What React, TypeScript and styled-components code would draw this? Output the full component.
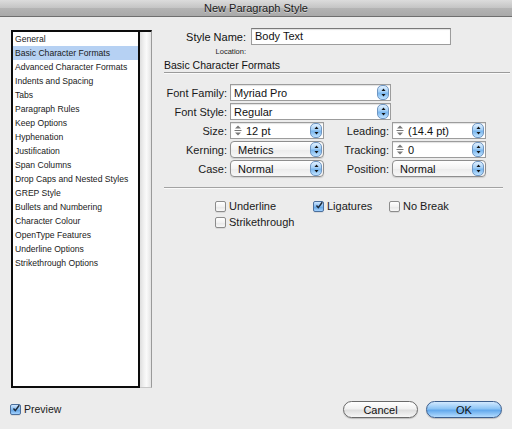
import React from "react";
import styled, { createGlobalStyle } from "styled-components";

const Global = createGlobalStyle`
  html, body { margin: 0; padding: 0; background: #ececec; }
  body { font-family: "Liberation Sans", Arial, sans-serif; color: #111; }
  * { box-sizing: border-box; }
`;

const Window = styled.div`
  width: 512px;
  height: 429px;
  display: flex;
  flex-direction: column;
  background: #ececec;
  overflow: hidden;
`;

const TitleBar = styled.div`
  height: 17px;
  flex: none;
  display: flex;
  align-items: center;
  justify-content: center;
  background: linear-gradient(#dcdcdc, #c4c4c4 50%, #b4b4b4 51%, #a9a9a9);
  border-bottom: 1px solid #6f6f6f;
  font-size: 11px;
  color: #1a1a1a;
  text-shadow: 0 1px 0 rgba(255, 255, 255, 0.45);
`;

const Main = styled.div`
  flex: 1;
  display: flex;
  align-items: flex-start;
  gap: 12px;
  padding: 11px 0 0 11px;
`;

const ListFrame = styled.div`
  margin-top: 2px;
  width: 141px;
  height: 358px;
  display: flex;
  flex: none;
`;

const ListBox = styled.div`
  width: 129px;
  height: 100%;
  background: #fff;
  border: 2px solid #0c0c0c;
  display: flex;
  flex-direction: column;
`;

const ScrollTrack = styled.div`
  flex: 1;
  height: 100%;
  border-top: 2px solid #0c0c0c;
  border-right: 1px solid #9a9a9a;
  border-bottom: 1px solid #c8c8c8;
  background: linear-gradient(to right, #dedede, #f3f3f3 40%, #fafafa 60%, #e4e4e4);
`;

const ListItem = styled.div<{ $selected?: boolean }>`
  height: 14px;
  line-height: 14px;
  padding-left: 2px;
  font-size: 8.6px;
  white-space: nowrap;
  color: #1a1a1a;
  background: ${(p) => (p.$selected ? "#b6d1f3" : "transparent")};
`;

const Panel = styled.div`
  flex: 1;
  display: flex;
  flex-direction: column;
`;

const NameRow = styled.div`
  display: flex;
  align-items: center;
  height: 17px;
  gap: 5px;
`;

const NameLabel = styled.div`
  width: 82px;
  text-align: right;
  font-size: 11px;
`;

const TextInput = styled.div`
  width: 200px;
  height: 17px;
  background: #fff;
  border: 1px solid #9c9c9c;
  border-top-color: #7a7a7a;
  box-shadow: inset 0 1px 1px rgba(0, 0, 0, 0.12);
  font-size: 11px;
  line-height: 15px;
  padding-left: 3px;
`;

const LocationRow = styled.div`
  margin-top: 2px;
  height: 10px;
  width: 82px;
  text-align: right;
  font-size: 7.5px;
  line-height: 10px;
  color: #222;
`;

const Heading = styled.div`
  margin-top: 2px;
  margin-right: 2px;
  font-size: 10.5px;
  line-height: 12px;
  border-bottom: 1px solid #9a9a9a;
  box-shadow: 0 1px 0 #fafafa;
  padding-bottom: 1px;
`;

const FormGrid = styled.div`
  margin-top: 11px;
  display: grid;
  grid-template-columns: 63px 94px 62px 94px;
  column-gap: 3px;
  row-gap: 2px;
  grid-auto-rows: 17px;
  align-items: center;
`;

const Label = styled.div`
  text-align: right;
  font-size: 11px;
  white-space: nowrap;
  color: #1a1a1a;
`;

const WideCell = styled.div`
  grid-column: 2 / 5;
`;

const Field = styled.div<{ $w?: number; $rounded?: boolean; $popup?: boolean }>`
  width: ${(p) => (p.$w ? `${p.$w}px` : "100%")};
  height: 17px;
  display: flex;
  align-items: center;
  background: ${(p) => (p.$popup ? "linear-gradient(#ffffff, #f3f3f3 50%, #ebebeb 51%, #f7f7f7)" : "#fff")};
  border: 1px solid ${(p) => (p.$popup ? "#8e8e8e" : "#9c9c9c")};
  border-radius: ${(p) => (p.$rounded ? "4px" : "0")};
  box-shadow: ${(p) => (p.$popup ? "0 1px 1px rgba(0,0,0,0.12)" : "inset 0 1px 1px rgba(0,0,0,0.12)")};
  font-size: 11px;
  padding-left: ${(p) => (p.$popup ? "7px" : "3px")};
`;

const FieldText = styled.span`
  flex: 1;
  white-space: nowrap;
  overflow: hidden;
`;

const ArrowCap = styled.div`
  flex: none;
  width: 12px;
  height: 15px;
  margin-right: 1px;
  border-radius: 5px;
  background: linear-gradient(#e0f0ff, #a3cff6 45%, #79b6ee 55%, #bfe2ff);
  border: 1px solid #6f96c2;
  display: flex;
  align-items: center;
  justify-content: center;
`;

const StepIconWrap = styled.span`
  flex: none;
  width: 9px;
  display: flex;
  align-items: center;
  margin-right: 3px;
`;

const Separator = styled.div`
  margin-top: 10px;
  width: 339px;
  height: 1px;
  background: #a3a3a3;
  box-shadow: 0 1px 0 #fafafa;
`;

const ChecksGrid = styled.div`
  margin-top: 12px;
  margin-left: 51px;
  display: grid;
  grid-template-columns: 98px 76px auto;
  grid-auto-rows: 12px;
  row-gap: 4px;
  align-items: center;
`;

const CheckItem = styled.label`
  display: flex;
  align-items: center;
  gap: 3px;
  font-size: 11px;
  white-space: nowrap;
  color: #1a1a1a;
`;

const Box = styled.span<{ $checked?: boolean }>`
  width: 11px;
  height: 11px;
  flex: none;
  border: 1px solid ${(p) => (p.$checked ? "#4b6f9c" : "#8c8c8c")};
  border-radius: 2px;
  background: ${(p) =>
    p.$checked
      ? "linear-gradient(#cfe6ff, #7fb8ef 50%, #5d9fe0 51%, #a3d2ff)"
      : "linear-gradient(#ffffff, #f2f2f2 50%, #e6e6e6 51%, #f8f8f8)"};
  box-shadow: 0 1px 0 rgba(0, 0, 0, 0.08);
  display: flex;
  align-items: center;
  justify-content: center;
  overflow: visible;
`;

const Footer = styled.div`
  height: 34px;
  flex: none;
  display: flex;
  align-items: flex-start;
  padding: 6px 10px 0 10px;
`;

const PreviewItem = styled(CheckItem)`
  margin-top: 2px;
  font-size: 10.5px;
`;

const Spacer = styled.div`
  flex: 1;
`;

const Buttons = styled.div`
  display: flex;
  gap: 8px;
`;

const AquaButton = styled.button<{ $primary?: boolean; $w: number }>`
  width: ${(p) => p.$w}px;
  height: 17px;
  border-radius: 9px;
  padding: 0;
  font-family: "Liberation Sans", Arial, sans-serif;
  font-size: 11px;
  color: #111;
  border: 1px solid ${(p) => (p.$primary ? "#3d5f8e" : "#6a6a6a")};
  background: ${(p) =>
    p.$primary
      ? "linear-gradient(#d2e9ff, #8cc4f5 45%, #62a8ec 55%, #b3dcff)"
      : "linear-gradient(#ffffff, #f1f1f1 45%, #dedede 55%, #f7f7f7)"};
  box-shadow: 0 1px 1px rgba(0, 0, 0, 0.2);
`;

const Arrows = () => (
  <svg width="7" height="11" viewBox="0 0 7 11">
    <path d="M3.5 1.5 L5.5 4 L1.5 4 Z" fill="#111" />
    <path d="M3.5 9.5 L5.5 7 L1.5 7 Z" fill="#111" />
  </svg>
);

const StepIcon = () => (
  <StepIconWrap>
    <svg width="8" height="11" viewBox="0 0 8 11">
      <path d="M4 0.5 L7 3.5 L1 3.5 Z" fill="#777" />
      <rect x="0.5" y="5" width="7" height="1" fill="#777" />
      <path d="M4 10.5 L7 7.5 L1 7.5 Z" fill="#777" />
    </svg>
  </StepIconWrap>
);

const Check = () => (
  <svg width="11" height="11" viewBox="0 0 11 11" style={{ marginTop: -2, marginLeft: 1 }}>
    <path d="M2 5.5 L4.5 8.5 L10 1" fill="none" stroke="#1d2a3a" strokeWidth="2" />
  </svg>
);

type CheckProps = { label: string; checked?: boolean };
const Checkbox = ({ label, checked }: CheckProps) => (
  <CheckItem>
    <Box $checked={checked}>{checked && <Check />}</Box>
    {label}
  </CheckItem>
);

const items = [
  "General",
  "Basic Character Formats",
  "Advanced Character Formats",
  "Indents and Spacing",
  "Tabs",
  "Paragraph Rules",
  "Keep Options",
  "Hyphenation",
  "Justification",
  "Span Columns",
  "Drop Caps and Nested Styles",
  "GREP Style",
  "Bullets and Numbering",
  "Character Colour",
  "OpenType Features",
  "Underline Options",
  "Strikethrough Options",
];

type SelProps = { value: string; w?: number; popup?: boolean; stepper?: boolean };
const Select = ({ value, w, popup, stepper }: SelProps) => (
  <Field $w={w} $popup={popup} $rounded={popup}>
    {stepper && <StepIcon />}
    <FieldText>{value}</FieldText>
    <ArrowCap>
      <Arrows />
    </ArrowCap>
  </Field>
);

export default function App() {
  return (
    <>
      <Global />
      <Window>
        <TitleBar>New Paragraph Style</TitleBar>
        <Main>
          <ListFrame>
            <ListBox>
              {items.map((it, i) => (
                <ListItem key={it} $selected={i === 1}>
                  {it}
                </ListItem>
              ))}
            </ListBox>
            <ScrollTrack />
          </ListFrame>
          <Panel>
            <NameRow>
              <NameLabel>Style Name:</NameLabel>
              <TextInput>Body Text</TextInput>
            </NameRow>
            <LocationRow>Location:</LocationRow>
            <Heading>Basic Character Formats</Heading>
            <FormGrid>
              <Label>Font Family:</Label>
              <WideCell>
                <Select value="Myriad Pro" w={161} />
              </WideCell>
              <Label>Font Style:</Label>
              <WideCell>
                <Select value="Regular" w={161} />
              </WideCell>
              <Label>Size:</Label>
              <Select value="12 pt" stepper />
              <Label>Leading:</Label>
              <Select value="(14.4 pt)" stepper />
              <Label>Kerning:</Label>
              <Select value="Metrics" popup />
              <Label>Tracking:</Label>
              <Select value="0" stepper />
              <Label>Case:</Label>
              <Select value="Normal" popup />
              <Label>Position:</Label>
              <Select value="Normal" popup />
            </FormGrid>
            <Separator />
            <ChecksGrid>
              <Checkbox label="Underline" />
              <Checkbox label="Ligatures" checked />
              <Checkbox label="No Break" />
              <Checkbox label="Strikethrough" />
            </ChecksGrid>
          </Panel>
        </Main>
        <Footer>
          <PreviewItem>
            <Box $checked>
              <Check />
            </Box>
            Preview
          </PreviewItem>
          <Spacer />
          <Buttons>
            <AquaButton $w={75}>Cancel</AquaButton>
            <AquaButton $w={76} $primary>
              OK
            </AquaButton>
          </Buttons>
        </Footer>
      </Window>
    </>
  );
}
